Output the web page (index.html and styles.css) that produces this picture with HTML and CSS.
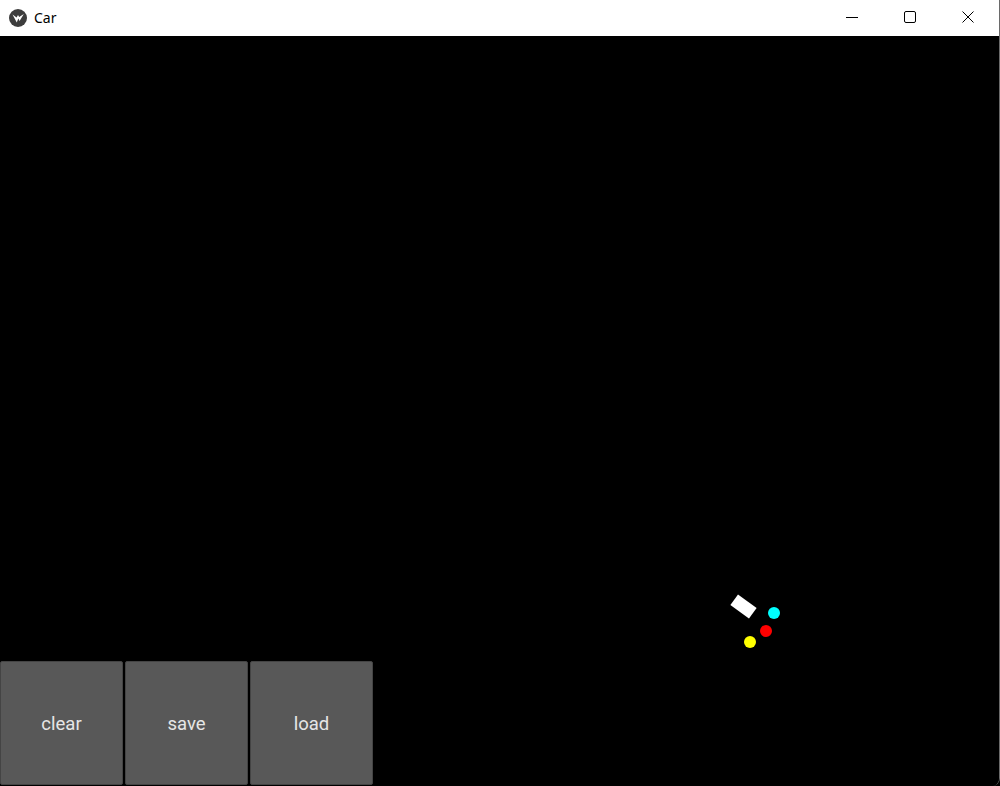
FILE: index.html
```html
<!DOCTYPE html>
<html>
<head>
<meta charset="utf-8">
<link rel="stylesheet" href="styles.css">
</head>
<body>
<div class="window">
  <header class="titlebar">
    <div class="title">
      <svg class="app-icon" width="18" height="18" viewBox="0 0 18 18">
        <circle cx="9" cy="9" r="9" fill="#3d3d3d"/>
        <path d="M3.5 5.5 L7.8 13.5 L9.3 9.5 L10.6 12 L14.8 5 L10.2 8 L9 6 L7.6 8.6 Z" fill="#ffffff"/>
      </svg>
      <span class="title-text">Car</span>
    </div>
    <div class="controls">
      <div class="ctl">
        <svg width="12" height="12" viewBox="0 0 12 12"><path d="M0 6.5 H12" stroke="#000" stroke-width="1"/></svg>
      </div>
      <div class="ctl">
        <svg width="12" height="12" viewBox="0 0 12 12"><rect x="0.5" y="0.5" width="11" height="11" rx="1.5" fill="none" stroke="#000" stroke-width="1"/></svg>
      </div>
      <div class="ctl">
        <svg width="12" height="12" viewBox="0 0 12 12"><path d="M0.5 0.5 L11.5 11.5 M11.5 0.5 L0.5 11.5" stroke="#000" stroke-width="1"/></svg>
      </div>
    </div>
  </header>
  <main class="canvas">
    <div class="car"></div>
    <div class="ball cyan"></div>
    <div class="ball red"></div>
    <div class="ball yellow"></div>
    <div class="buttons">
      <div class="btn-cell"><button class="btn">clear</button></div>
      <div class="btn-cell"><button class="btn">save</button></div>
      <div class="btn-cell"><button class="btn">load</button></div>
    </div>
  </main>
</div>
</body>
</html>
```

FILE: styles.css
```css
html, body {
  margin: 0;
  padding: 0;
  width: 1000px;
  height: 786px;
  overflow: hidden;
  background: #000;
}
.window {
  width: 1000px;
  height: 786px;
  display: flex;
  flex-direction: column;
  box-sizing: border-box;
  border-right: 1px solid #6a6a6a;
  border-bottom-right-radius: 8px;
  overflow: hidden;
  background: #000;
}
.titlebar {
  height: 36px;
  flex: 0 0 36px;
  background: #fff;
  display: flex;
  justify-content: space-between;
  align-items: stretch;
  font-family: "Noto Sans", "Liberation Sans", sans-serif;
}
.title {
  display: flex;
  align-items: center;
  padding-left: 9px;
  gap: 7px;
}
.app-icon { display: block; margin-top: -1px; }
.title-text {
  font-size: 14px;
  color: #000;
  margin-top: -1px;
}
.controls {
  display: flex;
  padding-right: 2px;
}
.ctl {
  width: 58px;
  display: flex;
  align-items: center;
  justify-content: center;
}
.ctl svg { display: block; margin-top: -2px; }
.canvas {
  position: relative;
  flex: 1;
  background: #000;
}
.car {
  position: absolute;
  left: 732px;
  top: 564px;
  width: 23px;
  height: 13px;
  background: #fff;
  transform: rotate(36deg);
}
.ball {
  position: absolute;
  width: 12px;
  height: 12px;
  border-radius: 50%;
}
.cyan { background: #00ffff; left: 768px; top: 571px; }
.red { background: #ff0000; left: 760px; top: 589px; }
.yellow { background: #ffff00; left: 744px; top: 600px; }
.buttons {
  position: absolute;
  left: 0;
  bottom: 0;
  display: flex;
}
.btn-cell {
  width: 125px;
  height: 125px;
  box-sizing: border-box;
  padding: 0 2px 1px 0;
}
.btn {
  width: 100%;
  height: 100%;
  margin: 0;
  box-sizing: border-box;
  background: #585858;
  border: 1px solid #444;
  border-radius: 2px;
  color: #e6e6e6;
  font-family: Roboto, "Noto Sans", sans-serif;
  font-size: 18.5px;
  padding: 2px 0 0 0;
}
```
